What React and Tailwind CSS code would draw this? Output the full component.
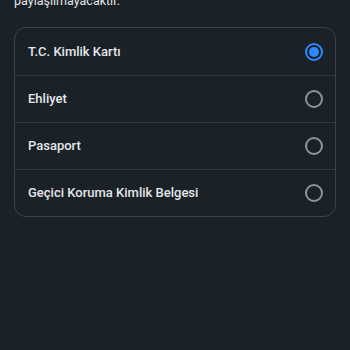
import { useState } from "react";

const options = [
  "T.C. Kimlik Kartı",
  "Ehliyet",
  "Pasaport",
  "Geçici Koruma Kimlik Belgesi",
];

const Radio = ({ checked }) =>
  checked ? (
    <span className="w-[18px] h-[18px] rounded-full border-2 border-[#2d88ff] flex items-center justify-center">
      <span className="w-[10px] h-[10px] rounded-full bg-[#2d88ff]" />
    </span>
  ) : (
    <span className="w-[18px] h-[18px] rounded-full border-2 border-[#8d949a]" />
  );

const App = () => {
  const [selected, setSelected] = useState(0);

  return (
    <div
      className="w-[350px] h-[350px] overflow-hidden bg-[#1a2228] text-[#e4e6eb]"
      style={{ fontFamily: "Roboto, 'Noto Sans', sans-serif" }}>
      <p className="px-[14px] -mt-[8px] text-[12.5px] leading-[18px]">
        paylaşılmayacaktır.
      </p>
      <div className="mx-[14px] mt-[17px] rounded-[12px] border border-[#3a444c] flex flex-col">
        {options.map((label, i) => (
          <button
            key={label}
            onClick={() => setSelected(i)}
            className={`h-[47px] pl-[13px] pr-[12px] flex items-center justify-between text-left ${
              i > 0 ? "border-t border-[#2f3940]" : ""
            }`}>
            <span className="text-[13px] font-medium text-[#e4e6eb]">
              {label}
            </span>
            <Radio checked={selected === i} />
          </button>
        ))}
      </div>
    </div>
  );
};

export default App;
